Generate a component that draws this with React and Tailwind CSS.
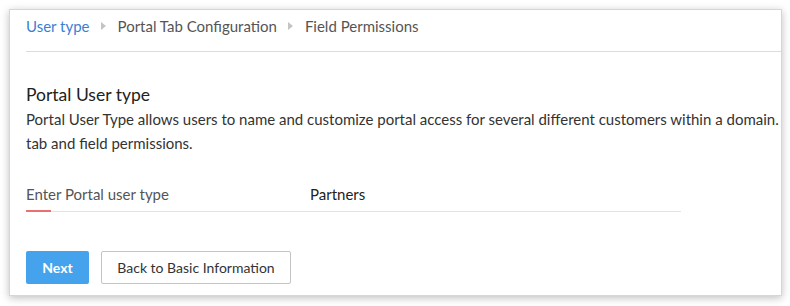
export default function App() {
  const Caret = () => (
    <svg width="5" height="8" viewBox="0 0 5 8" className="ml-[11px] mr-[12px]">
      <path d="M0 0 L5 4 L0 8 Z" fill="#c4c4c4" />
    </svg>
  );
  return (
    <div className="w-[790px] h-[306px] bg-white pt-[9px] pl-[9px]" style={{ fontFamily: "Lato, 'Open Sans', sans-serif" }}>
      <div className="w-[773px] h-[287px] bg-white border border-[#d6d6d6] shadow-[0_2px_8px_rgba(0,0,0,0.25)] flex flex-col">
        <div className="h-[42px] ml-[16px] border-b border-[#dcdcdc] pt-[6px]">
          <div className="flex items-center h-[20px] text-[15px] leading-[20px]">
            <span className="text-[#3a7fd5]">User type</span>
            <Caret />
            <span className="text-[#555]">Portal Tab Configuration</span>
            <Caret />
            <span className="text-[#555]">Field Permissions</span>
          </div>
        </div>
        <div className="pl-[16px] pt-[32px]">
          <div className="text-[17.5px] text-[#222] leading-[22px]">Portal User type</div>
          <div className="text-[15px] text-[#333] leading-[24px] mt-[1px] whitespace-nowrap">
            Portal User Type allows users to name and customize portal access for several different customers within a domain.
          </div>
          <div className="text-[15px] text-[#333] leading-[24px]">tab and field permissions.</div>
          <div className="mt-[23px] w-[655px] flex text-[15px] h-[34px] items-center border-b border-[#e3e3e3] relative">
            <span className="text-[#555] w-[284px]">Enter Portal user type</span>
            <span className="text-[#222]">Partners</span>
            <div className="absolute left-0 bottom-[-1px] w-[25px] h-[2px] bg-[#e8716f]" />
          </div>
          <div className="mt-[39px] flex gap-[12px]">
            <button className="w-[63px] h-[33px] rounded-[2px] bg-[#44a3ec] text-white text-[14px] font-bold">Next</button>
            <button className="w-[190px] h-[33px] rounded-[2px] border border-[#c4c4c4] bg-white text-[#333] text-[14px]">Back to Basic Information</button>
          </div>
        </div>
      </div>
    </div>
  );
}
